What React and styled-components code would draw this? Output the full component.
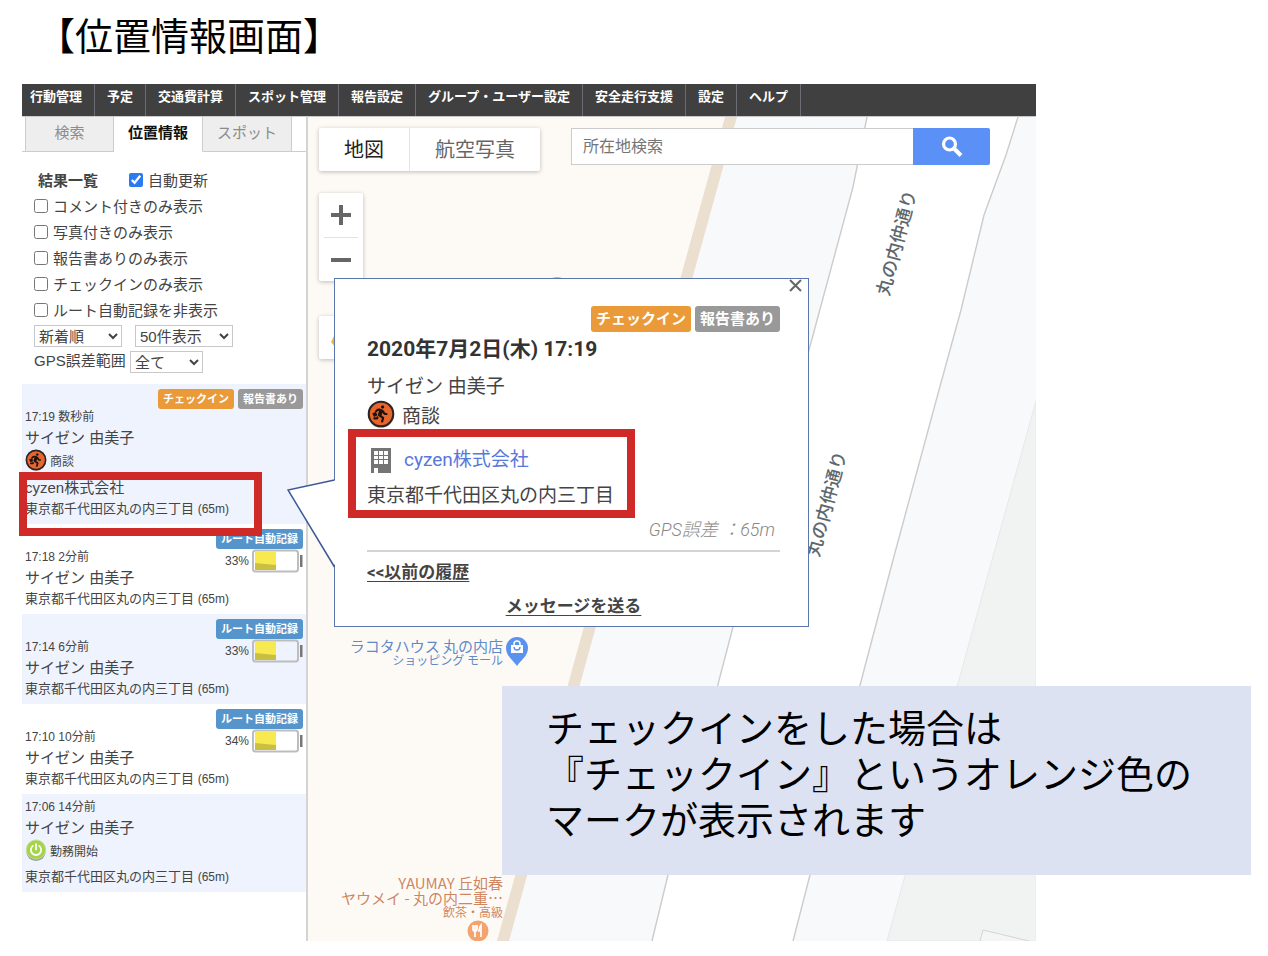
import React, { useState } from 'react';
import styled, { createGlobalStyle } from 'styled-components';
import { FaPersonRunning } from 'react-icons/fa6';

const GlobalStyle = createGlobalStyle`
  * {
    box-sizing: border-box;
  }
  body {
    margin: 0;
    background: #fff;
    color: #444;
    font-family: 'Liberation Sans', 'Noto Sans CJK JP', sans-serif;
  }
  button, input, select {
    font-family: inherit;
  }
`;

const Slide = styled.main`
  position: relative;
  padding-bottom: 15px;
`;

const Title = styled.h1`
  margin: 0;
  padding: 12px 37px 22px;
  color: #000;
  font-size: 38px;
  font-weight: 400;
  line-height: 50px;
`;

const Screen = styled.div`
  position: relative;
  margin: 0 232px 0 22px;
`;

const Nav = styled.nav`
  display: flex;
  height: 32px;
  background: #404040;
`;

const NavLink = styled.a`
  padding: 0 12px 6px;
  border-right: 1px solid #6c6c74;
  color: #fff;
  font-size: 13px;
  font-weight: 700;
  line-height: 26px;
  text-decoration: none;
  white-space: nowrap;

  &:first-child {
    padding-left: 8px;
  }
`;

const Body = styled.div`
  display: flex;
`;

const Sidebar = styled.aside`
  flex: 0 0 286px;
  padding-bottom: 49px;
  border-top: 1px solid #ccc;
  border-right: 2px solid #d4d4d4;
`;

const Tabs = styled.div`
  display: flex;
  padding-left: 3px;
  border-bottom: 1px solid #ccc;
`;

const Tab = styled.button`
  width: 89px;
  height: 35px;
  margin-bottom: -1px;
  padding: 0 0 3px;
  border: 0;
  border-right: 1px solid #ccc;
  border-bottom: 1px solid ${(props) => (props.$active ? '#fff' : '#ccc')};
  background: ${(props) => (props.$active ? '#fff' : '#eee')};
  color: ${(props) => (props.$active ? '#111' : '#8c8c8c')};
  font-size: 15px;
  font-weight: ${(props) => (props.$active ? 700 : 400)};
  line-height: 30px;

  &:first-child {
    border-left: 1px solid #ccc;
  }
`;

const Filters = styled.div`
  padding: 16px 12px 8px;
  font-size: 15px;
  line-height: 26px;
`;

const FilterHead = styled.div`
  display: flex;
  gap: 31px;
  padding-left: 4px;
`;

const CheckLabel = styled.label`
  display: flex;
  align-items: center;
  gap: 5px;

  input {
    width: 14px;
    height: 14px;
    margin: 0 0 3px;
    accent-color: #2a7af0;
  }
`;

const SelectRow = styled.div`
  display: flex;
  gap: ${(props) => props.$gap || 0}px;
  height: 26px;
  padding-top: 1px;
`;

const Select = styled.select`
  width: ${(props) => props.$width}px;
  height: 22px;
  padding: 0;
  border: 1px solid #c8c8c8;
  background: #fff;
  color: #444;
  font-size: 15px;
`;

const SelectLabel = styled.label`
  width: 96px;
  line-height: 20px;
  white-space: nowrap;
`;

const List = styled.ul`
  margin: 0;
  padding: 0;
  list-style: none;
`;

const Entry = styled.li`
  display: grid;
  padding: 3px 3px 5px;

  &:nth-child(odd) {
    background: #eef3fe;
  }
`;

const Details = styled.div`
  grid-area: 1 / 1;
  padding-top: ${(props) => (props.$badged ? 20 : 0)}px;
`;

const Status = styled.div`
  display: flex;
  grid-area: 1 / 1;
  flex-direction: column;
  align-items: flex-end;
  align-self: start;
  justify-self: end;
  padding-top: 2px;
`;

const Badges = styled.div`
  display: flex;
  justify-content: flex-end;
  gap: 4px;
`;

const Badge = styled.span`
  padding: 0 5px;
  border-radius: 3px;
  background: ${(props) => props.$color};
  color: #fff;
  font-size: ${(props) => (props.$large ? 15 : 11)}px;
  font-weight: 700;
  line-height: ${(props) => (props.$large ? 26 : 20)}px;
  white-space: nowrap;
`;

const Time = styled.div`
  font-size: 12px;
  line-height: 20px;
`;

const Name = styled.div`
  font-size: 15px;
  line-height: 22px;
`;

const Activity = styled.div`
  display: flex;
  align-items: center;
  gap: 3px;
  height: 22px;
  margin-bottom: 6px;
  font-size: 12px;
`;

const Place = styled.div`
  position: relative;
`;

const Company = styled.div`
  font-size: 15px;
  line-height: 22px;
`;

const Address = styled.div`
  font-size: 13px;
  line-height: 20px;
  white-space: nowrap;

  small {
    font-size: 12px;
  }
`;

const Highlight = styled.div`
  position: absolute;
  z-index: 3;
  top: ${(props) => props.$top}px;
  bottom: ${(props) => props.$bottom}px;
  left: ${(props) => props.$left}px;
  width: ${(props) => props.$width}px;
  border: 8px solid #cf2a27;
  pointer-events: none;
`;

const BatteryRow = styled.div`
  display: flex;
  align-items: center;
  gap: 3px;
  font-size: 12px;
`;

const MapArea = styled.section`
  position: relative;
  flex: 1;
  min-width: 0;
  border-top: 1px solid #c8c8c8;
`;

const MapDrawing = styled.svg`
  position: absolute;
  top: 0;
  left: 0;
  width: 100%;
  height: 100%;
`;

const Controls = styled.div`
  position: relative;
  display: flex;
  gap: 31px;
  padding: 11px 46px 0 11px;
`;

const MapTypes = styled.div`
  display: flex;
  border-radius: 2px;
  background: #fff;
  box-shadow: 0 1px 4px rgba(0, 0, 0, 0.25);
`;

const MapType = styled.button`
  height: 43px;
  padding: 0 25px 3px;
  border: 0;
  background: none;
  color: ${(props) => (props.$active ? '#222' : '#666')};
  font-size: 20px;
  white-space: nowrap;

  & + & {
    border-left: 1px solid #e4e4e4;
  }
`;

const Search = styled.form`
  display: flex;
  flex: 1;
  height: 37px;
  min-width: 0;

  input {
    flex: 1;
    min-width: 0;
    padding: 0 11px;
    border: 1px solid #ccc;
    border-right: 0;
    font-size: 16px;
  }
  input::placeholder {
    color: #757575;
  }
  button {
    display: flex;
    align-items: center;
    justify-content: center;
    width: 77px;
    border: 0;
    border-radius: 0 2px 2px 0;
    background: #5b90f7;
  }
`;

const ZoomBox = styled.div`
  position: relative;
  display: flex;
  flex-direction: column;
  align-items: center;
  width: 44px;
  margin: 22px 0 35px 11px;
  border-radius: 2px;
  background: #fff;
  box-shadow: 0 1px 4px rgba(0, 0, 0, 0.25);
`;

const ZoomButton = styled.button`
  width: 34px;
  height: 44px;
  padding: 0;
  border: 0;
  background: none;

  & + & {
    border-top: 1px solid #e2e2e2;
  }
  svg {
    display: block;
    margin: auto;
  }
`;

const StreetView = styled(ZoomBox)`
  height: 43px;
  margin: 0 0 0 11px;
  justify-content: center;
`;

const Poi = styled.div`
  position: absolute;
  top: ${(props) => props.$top}px;
  right: calc(100% - 195px);
  color: ${(props) => props.$color};
  font-family: 'Noto Sans CJK JP', sans-serif;
  font-size: 15px;
  line-height: 15px;
  text-align: right;
  text-shadow: 0 0 2px #fff, 0 0 2px #fff;
  white-space: nowrap;

  small {
    display: block;
    font-size: 12px;
    line-height: 14px;
  }
`;

const StreetName = styled.span`
  position: absolute;
  top: ${(props) => props.$y}px;
  left: ${(props) => props.$x}px;
  width: 108px;
  color: #5d686d;
  font-size: 18px;
  font-weight: 500;
  line-height: 24px;
  transform: rotate(-75deg);
`;

const Popup = styled.section`
  position: absolute;
  z-index: 2;
  top: 194px;
  left: 312px;
  display: flex;
  flex-direction: column;
  width: 475px;
  padding: 27px 28px 6px 32px;
  border: 1px solid #5b76ac;
  background: #fff;
  color: #444;
  font-family: Roboto, 'Noto Sans CJK JP', sans-serif;
  font-size: 19px;
`;

const Tail = styled.svg`
  position: absolute;
  top: 200px;
  left: -48px;
`;

const Close = styled.button`
  position: absolute;
  top: 0;
  right: 5px;
  padding: 0;
  border: 0;
  background: none;

  svg {
    display: block;
  }
`;

const PopupDate = styled.h2`
  margin: 3px 0 6px;
  color: #333;
  font-size: 21px;
  font-weight: 700;
  line-height: 28px;
`;

const PopupRow = styled.div`
  display: flex;
  align-items: center;
  gap: 7px;
  height: 30px;
`;

const PopupPlace = styled(Place)`
  display: flex;
  flex-direction: column;
  gap: 4px;
  margin: 15px 0 3px;
  line-height: 32px;
`;

const CompanyLink = styled.a`
  display: flex;
  align-items: center;
  gap: 13px;
  height: 32px;
  padding-left: 4px;
  color: #5878dc;
  text-decoration: none;
`;

const Accuracy = styled.div`
  padding-right: 5px;
  color: #888;
  font-size: 18px;
  font-style: italic;
  font-weight: 300;
  line-height: 30px;
  text-align: right;
`;

const Rule = styled.hr`
  width: 100%;
  margin: 5px 0 0;
  border: 0;
  border-top: 2px solid #d4d4d4;
`;

const PopupLink = styled.a`
  align-self: ${(props) => props.$align};
  margin-top: 6px;
  color: #444;
  font-size: 17px;
  font-weight: 700;
  line-height: 28px;
  text-underline-offset: 3px;
`;

const Caption = styled.p`
  position: absolute;
  z-index: 4;
  top: 686px;
  right: 17px;
  left: 502px;
  min-height: 189px;
  margin: 0;
  padding: 20px 44px;
  background: #dce2f2;
  color: #000;
  font-size: 38px;
  line-height: 46px;
`;

const NAV_ITEMS = [
  '行動管理', '予定', '交通費計算', 'スポット管理', '報告設定',
  'グループ・ユーザー設定', '安全走行支援', '設定', 'ヘルプ',
];

const TABS = ['検索', '位置情報', 'スポット'];

const FILTERS = [
  'コメント付きのみ表示',
  '写真付きのみ表示',
  '報告書ありのみ表示',
  'チェックインのみ表示',
  'ルート自動記録を非表示',
];

const BADGE_COLORS = {
  チェックイン: '#ea9a38',
  報告書あり: '#999',
  ルート自動記録: '#5595cb',
};

const USER = 'サイゼン 由美子';
const ADDRESS = '東京都千代田区丸の内三丁目';

const ENTRIES = [
  { time: '17:19 数秒前', badges: ['チェックイン', '報告書あり'], activity: '商談', icon: 'run', company: 'cyzen株式会社' },
  { time: '17:18 2分前', badges: ['ルート自動記録'], battery: 33 },
  { time: '17:14 6分前', badges: ['ルート自動記録'], battery: 33 },
  { time: '17:10 10分前', badges: ['ルート自動記録'], battery: 34 },
  { time: '17:06 14分前', badges: [], activity: '勤務開始', icon: 'power' },
];

const RunIcon = ({ size }) => (
  <svg width={size} height={size} viewBox="0 0 24 24" aria-hidden="true">
    <circle cx="12" cy="13" r="11" fill="#999" opacity="0.6" />
    <circle cx="12" cy="12" r="10.5" fill="#e8652c" stroke="#2c2420" strokeWidth="1.8" />
    <FaPersonRunning x="4.5" y="4.5" size="15" color="#1c1410" />
    <path d="M4.500 11.500l3-1.500 1.500 3-3 1.500z" fill="#1c1410" />
  </svg>
);

const PowerIcon = () => (
  <svg width="22" height="22" viewBox="0 0 24 24" aria-hidden="true">
    <circle cx="12" cy="13.5" r="10.5" fill="#999" />
    <circle cx="12" cy="11.5" r="10.5" fill="#a3d645" stroke="#c9dca0" />
    <path d="M8.5 7.5a5.6 5.6 0 1 0 7 0M12 5.5v6" fill="none" stroke="#fff" strokeWidth="2" strokeLinecap="round" />
  </svg>
);

const BuildingIcon = () => (
  <svg width="20" height="25" viewBox="0 0 20 25" aria-hidden="true">
    <path d="M0 0h20v25H7v-5H3v5H0z" fill="#757575" />
    <path
      d="M3 3h4v4H3zM8 3h4v4H8zM13 3h4v4h-4zM3 8h4v3H3zM8 8h4v3H8zM13 8h4v3h-4zM3 12h4v4H3zM8 12h4v4H8zM13 12h4v4h-4z"
      fill="#fff"
    />
  </svg>
);

const SearchIcon = () => (
  <svg width="22" height="22" viewBox="0 0 22 22" aria-hidden="true">
    <circle cx="8.500" cy="8" r="6" fill="none" stroke="#fff" strokeWidth="3.200" />
    <path d="M13 12.500l7 7" stroke="#fff" strokeWidth="4" />
  </svg>
);

const Battery = ({ level }) => (
  <BatteryRow>
    <span>{level}%</span>
    <svg width="51" height="24" viewBox="0 0 51 24" aria-hidden="true">
      <rect x="1" y="1.5" width="45" height="21" rx="2.5" fill="none" stroke="#bdbdbd" strokeWidth="2" />
      <path d="M3 3h21v18H3z" fill="#f6ea50" />
      <path d="M3 14l21 2v5H3z" fill="#cbbf42" />
      <path d="M48 6h2.500v12H48z" fill="#777" />
    </svg>
  </BatteryRow>
);

const BadgeList = ({ items, large }) => (
  <Badges>
    {items.map((item) => (
      <Badge key={item} $color={BADGE_COLORS[item]} $large={large}>{item}</Badge>
    ))}
  </Badges>
);

const HistoryEntry = ({ entry }) => (
  <Entry>
    <Details $badged={entry.badges.length > 0}>
      <Time>{entry.time}</Time>
      <Name>{USER}</Name>
      {entry.activity && (
        <Activity>
          {entry.icon === 'run' ? <RunIcon size={22} /> : <PowerIcon />}
          {entry.activity}
        </Activity>
      )}
      <Place>
        {entry.company && <Company>{entry.company}</Company>}
        <Address>{ADDRESS} <small>(65m)</small></Address>
        {entry.company && <Highlight $top={-5} $bottom={-17} $left={-6} $width={243} />}
      </Place>
    </Details>
    {entry.badges.length > 0 && (
      <Status>
        <BadgeList items={entry.badges} />
        {entry.battery && <Battery level={entry.battery} />}
      </Status>
    )}
  </Entry>
);

const MapBackground = () => (
  <MapDrawing viewBox="0 0 728 824" preserveAspectRatio="xMinYMin slice" aria-hidden="true">
    <path d="M0 0h728v824H0z" fill="#fdf9f4" />
    <path d="M423 0h305v824H195z" fill="#f8f9fb" />
    <path d="M417 0h12L201 824h-12z" fill="#ebdfcf" />
    <path d="M559 0L545 70L501 233L425 510L360 758L344 824H485L502 758L585 443L631 273L653 193L676 98L698 38L710 0z" fill="#fff" />
    <path d="M559 0L545 70L501 233L425 510L360 758L344 824M710 0L698 38L676 98L653 193L631 273L585 443L502 758L485 824" fill="none" stroke="#ccc" strokeWidth="1.4" />
    <path d="M728 284L684 443L579 824H728z" fill="#f1f3f3" stroke="#e6e8e8" />
    <path d="M672 824l3-11 46 11" fill="#f5f5f5" stroke="#d4d4d4" />
    <circle cx="249" cy="171" r="11" fill="#f2a36e" />
    <path d="M209 549c-4-6-11-10-11-18a11 11 0 0 1 22 0c0 8-7 12-11 18z" fill="#5a93ef" />
    <path d="M203 528h12v8h-12z" fill="#fff" />
    <path d="M206 528v-1a3 3 0 0 1 6 0v1" fill="none" stroke="#fff" strokeWidth="1.5" />
    <path d="M206 530a3 3 0 0 0 6 0" fill="none" stroke="#5a93ef" strokeWidth="1.4" />
    <circle cx="170" cy="814" r="10.500" fill="#f2a36e" />
    <path d="M165 808v4q0 2 2 2v6M167 808v6M169 808v4q0 2-2 2M173 820v-12q-2 2-2 6h2" fill="none" stroke="#fff" strokeWidth="1.700" />
  </MapDrawing>
);

const CheckinPopup = () => (
  <Popup>
    <Tail width="50" height="90" viewBox="0 0 50 90" aria-hidden="true">
      <path d="M49 1L1 11L49 88z" fill="#fff" />
      <path d="M47.500 1L1 11L47.500 88" fill="none" stroke="#3c5a96" strokeWidth="1.500" />
    </Tail>
    <Close aria-label="閉じる">
      <svg width="15" height="15" viewBox="0 0 15 15">
        <path d="M2 1l11 11M13 1L2 12" stroke="#666" strokeWidth="2" />
      </svg>
    </Close>
    <BadgeList items={['チェックイン', '報告書あり']} large />
    <PopupDate>2020年7月2日(木) 17:19</PopupDate>
    <PopupRow>{USER}</PopupRow>
    <PopupRow>
      <RunIcon size={28} />
      商談
    </PopupRow>
    <PopupPlace>
      <CompanyLink href="#company">
        <BuildingIcon />
        cyzen株式会社
      </CompanyLink>
      <div>{ADDRESS}</div>
      <Highlight $top={-15} $bottom={-6} $left={-19} $width={287} />
    </PopupPlace>
    <Accuracy>GPS誤差 ：65m</Accuracy>
    <Rule />
    <PopupLink href="#history" $align="flex-start">&lt;&lt;以前の履歴</PopupLink>
    <PopupLink href="#message" $align="center">メッセージを送る</PopupLink>
  </Popup>
);

function App() {
  const [tab, setTab] = useState('位置情報');

  return (
    <Slide>
      <GlobalStyle />
      <Title>【位置情報画面】</Title>
      <Screen>
        <Nav>
          {NAV_ITEMS.map((item) => (
            <NavLink key={item} href="#menu">{item}</NavLink>
          ))}
        </Nav>
        <Body>
          <Sidebar>
            <Tabs>
              {TABS.map((item) => (
                <Tab key={item} $active={item === tab} onClick={() => setTab(item)}>{item}</Tab>
              ))}
            </Tabs>
            <Filters>
              <FilterHead>
                <strong>結果一覧</strong>
                <CheckLabel>
                  <input type="checkbox" defaultChecked />
                  自動更新
                </CheckLabel>
              </FilterHead>
              {FILTERS.map((label) => (
                <CheckLabel key={label}>
                  <input type="checkbox" />
                  {label}
                </CheckLabel>
              ))}
              <SelectRow $gap={13}>
                <Select $width={88} aria-label="並び順">
                  <option>新着順</option>
                </Select>
                <Select $width={98} aria-label="表示件数">
                  <option>50件表示</option>
                </Select>
              </SelectRow>
              <SelectRow>
                <SelectLabel htmlFor="gps-range">GPS誤差範囲</SelectLabel>
                <Select id="gps-range" $width={73}>
                  <option>全て</option>
                </Select>
              </SelectRow>
            </Filters>
            <List>
              {ENTRIES.map((entry) => (
                <HistoryEntry key={entry.time} entry={entry} />
              ))}
            </List>
          </Sidebar>
          <MapArea>
            <MapBackground />
            <Controls>
              <MapTypes>
                <MapType $active>地図</MapType>
                <MapType>航空写真</MapType>
              </MapTypes>
              <Search onSubmit={(e) => e.preventDefault()}>
                <input type="text" placeholder="所在地検索" aria-label="所在地検索" />
                <button type="submit" aria-label="検索">
                  <SearchIcon />
                </button>
              </Search>
            </Controls>
            <ZoomBox>
              <ZoomButton aria-label="拡大">
                <svg width="20" height="20" viewBox="0 0 20 20">
                  <path d="M0 10h20M10 0v20" stroke="#666" strokeWidth="4" />
                </svg>
              </ZoomButton>
              <ZoomButton aria-label="縮小">
                <svg width="20" height="20" viewBox="0 0 20 20">
                  <path d="M0 10h20" stroke="#666" strokeWidth="4" />
                </svg>
              </ZoomButton>
            </ZoomBox>
            <StreetView>
              <svg width="20" height="24" viewBox="0 0 20 24" aria-hidden="true">
                <circle cx="10" cy="5" r="4" fill="#f2b632" />
                <path d="M3 10h14l-2 12H5L0 16z" fill="#f2b632" />
              </svg>
            </StreetView>
            <StreetName $x={535} $y={114}>丸の内仲通り</StreetName>
            <StreetName $x={465} $y={375}>丸の内仲通り</StreetName>
            <Poi $top={521} $color="#6189c6">
              ラコタハウス 丸の内店
              <small>ショッピング モール</small>
            </Poi>
            <Poi $top={758} $color="#cf855f">
              YAUMAY 丘如春
              <br />
              ヤウメイ - 丸の内二重…
              <small>飲茶・高級</small>
            </Poi>
          </MapArea>
        </Body>
        <CheckinPopup />
      </Screen>
      <Caption>
        チェックインをした場合は
        <br />
        『チェックイン』というオレンジ色の
        <br />
        マークが表示されます
      </Caption>
    </Slide>
  );
}

export default App;
